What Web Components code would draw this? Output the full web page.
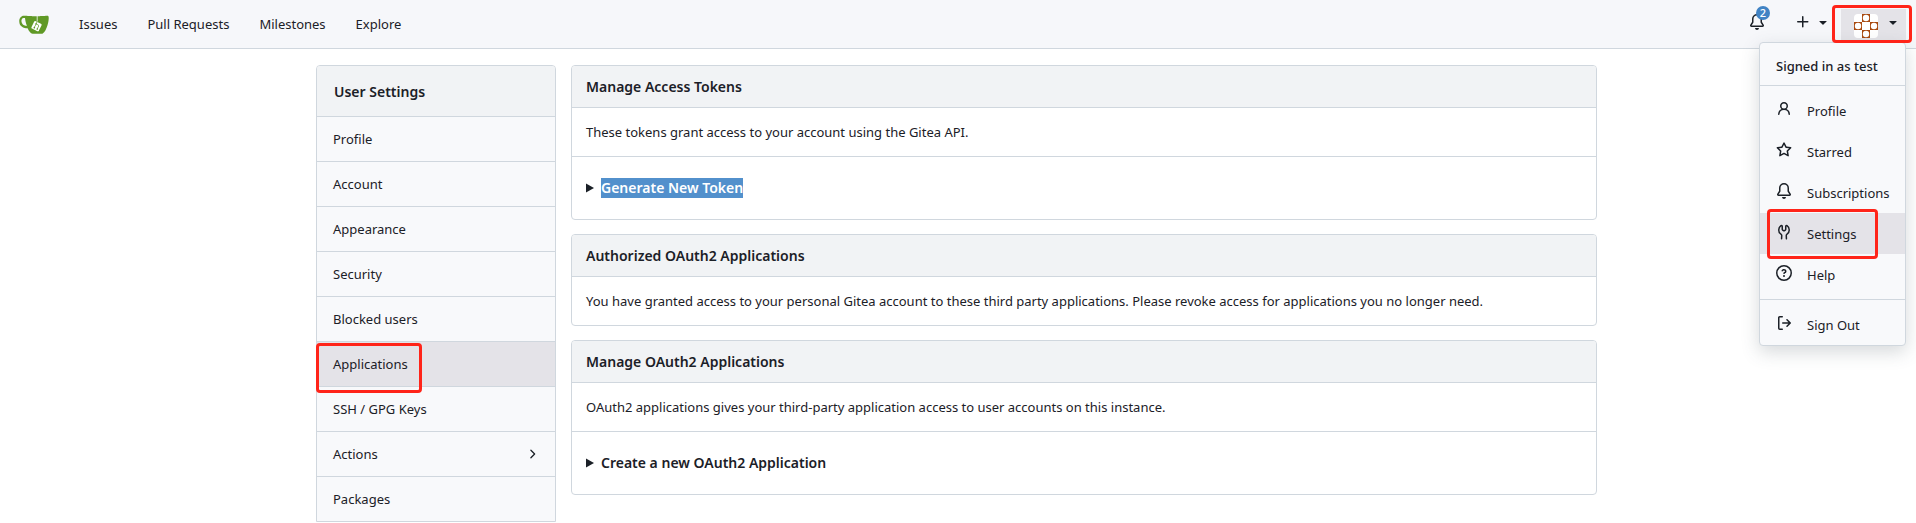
<!DOCTYPE html>
<html lang="en">
<head>
<meta charset="utf-8">
<title>Applications - User Settings - Gitea</title>
<style>
:root {
  --text: #1b2027;
  --border: #d0d7de;
  --nav: #f6f7fa;
  --menu: #f8f9fb;
  --header: #f1f3f5;
  --active: #e4e3e8;
  --accent: #4183c4;
  --mark: #ff2419;
}
body {
  margin: 0;
  background: #fff;
  color: var(--text);
  font: 13px/20px "Noto Sans", "Open Sans", sans-serif;
}
</style>
</head>
<body>
<top-nav>
  <nav-link>Issues</nav-link>
  <nav-link>Pull Requests</nav-link>
  <nav-link>Milestones</nav-link>
  <nav-link>Explore</nav-link>
  <user-menu slot="user" name="test"></user-menu>
</top-nav>
<settings-layout>
  <side-menu slot="side" heading="User Settings">
    <side-item>Profile</side-item>
    <side-item>Account</side-item>
    <side-item>Appearance</side-item>
    <side-item>Security</side-item>
    <side-item>Blocked users</side-item>
    <side-item active marked>Applications</side-item>
    <side-item>SSH / GPG Keys</side-item>
    <side-item more>Actions</side-item>
    <side-item>Packages</side-item>
  </side-menu>
  <settings-panel heading="Manage Access Tokens">
    These tokens grant access to your account using the Gitea API.
    <expand-row slot="extra" selected>Generate New Token</expand-row>
  </settings-panel>
  <settings-panel heading="Authorized OAuth2 Applications">
    You have granted access to your personal Gitea account to these third party applications. Please revoke access for applications you no longer need.
  </settings-panel>
  <settings-panel heading="Manage OAuth2 Applications">
    OAuth2 applications gives your third-party application access to user accounts on this instance.
    <expand-row slot="extra">Create a new OAuth2 Application</expand-row>
  </settings-panel>
</settings-layout>
<script>
const ICONS = {
  bell: 'M8 16a2 2 0 0 0 1.985-1.75c.017-.137-.097-.25-.235-.25h-3.5c-.138 0-.252.113-.235.25A2 2 0 0 0 8 16ZM3 5a5 5 0 0 1 10 0v2.947c0 .05.015.098.042.139l1.703 2.555A1.519 1.519 0 0 1 13.482 13H2.518a1.516 1.516 0 0 1-1.263-2.36l1.703-2.554A.255.255 0 0 0 3 7.947Zm5-3.5A3.5 3.5 0 0 0 4.5 5v2.947c0 .346-.102.683-.294.97l-1.703 2.556a.017.017 0 0 0-.003.01l.001.006c0 .002.002.004.004.006l.006.004.007.001h10.964l.007-.001.006-.004.004-.006.001-.007a.017.017 0 0 0-.003-.01l-1.703-2.554a1.745 1.745 0 0 1-.294-.97V5A3.5 3.5 0 0 0 8 1.5Z',
  plus: 'M7.75 2a.75.75 0 0 1 .75.75V7h4.25a.75.75 0 0 1 0 1.5H8.5v4.25a.75.75 0 0 1-1.5 0V8.5H2.75a.75.75 0 0 1 0-1.5H7V2.75A.75.75 0 0 1 7.75 2Z',
  caret: 'm4.427 7.427 3.396 3.396a.25.25 0 0 0 .354 0l3.396-3.396A.25.25 0 0 0 11.396 7H4.604a.25.25 0 0 0-.177.427Z',
  chevron: 'M6.22 3.22a.75.75 0 0 1 1.06 0l4.25 4.25a.75.75 0 0 1 0 1.06l-4.25 4.25a.751.751 0 0 1-1.042-.018.751.751 0 0 1-.018-1.042L9.94 8 6.22 4.28a.75.75 0 0 1 0-1.06Z',
  person: 'M10.561 8.073a6.005 6.005 0 0 1 3.432 5.142.75.75 0 1 1-1.498.07 4.5 4.5 0 0 0-8.99 0 .75.75 0 0 1-1.498-.07 6.004 6.004 0 0 1 3.431-5.142 3.999 3.999 0 1 1 5.123 0ZM10.5 5a2.5 2.5 0 1 0-5 0 2.5 2.5 0 0 0 5 0Z',
  star: 'M8 .25a.75.75 0 0 1 .673.418l1.882 3.815 4.21.612a.75.75 0 0 1 .416 1.279l-3.046 2.97.719 4.192a.751.751 0 0 1-1.088.791L8 12.347l-3.766 1.98a.75.75 0 0 1-1.088-.79l.72-4.194L.818 6.374a.75.75 0 0 1 .416-1.28l4.21-.611L7.327.668A.75.75 0 0 1 8 .25Zm0 2.445L6.615 5.5a.75.75 0 0 1-.564.41l-3.097.45 2.24 2.184a.75.75 0 0 1 .216.664l-.528 3.084 2.769-1.456a.75.75 0 0 1 .698 0l2.77 1.456-.53-3.084a.75.75 0 0 1 .216-.664l2.24-2.183-3.096-.45a.75.75 0 0 1-.564-.41L8 2.694Z',
  tools: 'M5.433 2.304A4.492 4.492 0 0 0 3.5 6c0 1.598.832 3.002 2.09 3.802.518.328.929.923.902 1.64v.008l-.164 3.337a.75.75 0 1 1-1.498-.073l.163-3.33c.002-.085-.05-.216-.207-.316A5.996 5.996 0 0 1 2 6a5.993 5.993 0 0 1 2.567-4.92 1.482 1.482 0 0 1 1.673-.04c.462.296.76.827.76 1.423v2.82c0 .082.041.16.11.206l.75.51a.25.25 0 0 0 .28 0l.75-.51A.249.249 0 0 0 9 5.282V2.463c0-.596.298-1.127.76-1.423a1.482 1.482 0 0 1 1.673.04A5.993 5.993 0 0 1 14 6a5.996 5.996 0 0 1-2.786 5.068c-.157.1-.209.23-.207.315l.163 3.33a.752.752 0 0 1-1.094.714.75.75 0 0 1-.404-.64l-.164-3.345c-.027-.717.384-1.312.902-1.64A4.495 4.495 0 0 0 12.5 6a4.492 4.492 0 0 0-1.933-3.696c-.024.017-.067.067-.067.16v2.818a1.75 1.75 0 0 1-.767 1.448l-.75.51a1.75 1.75 0 0 1-1.966 0l-.75-.51A1.75 1.75 0 0 1 5.5 5.282V2.463c0-.092-.043-.142-.067-.159Z',
  question: 'M0 8a8 8 0 1 1 16 0A8 8 0 0 1 0 8Zm8-6.5a6.5 6.5 0 1 0 0 13 6.5 6.5 0 0 0 0-13ZM6.92 6.085h.001a.749.749 0 1 1-1.342-.67c.169-.339.436-.701.849-.977C6.845 4.16 7.369 4 8 4a2.756 2.756 0 0 1 1.637.525c.503.377.863.965.863 1.725 0 .448-.115.83-.329 1.15-.205.307-.47.513-.692.662-.109.072-.22.138-.313.195l-.006.004a6.24 6.24 0 0 0-.26.16.952.952 0 0 0-.276.245.75.75 0 0 1-1.248-.832c.184-.264.42-.489.692-.661.103-.067.207-.132.313-.195l.007-.004c.1-.061.182-.11.258-.161a.969.969 0 0 0 .277-.245C8.96 6.514 9 6.427 9 6.25a.612.612 0 0 0-.262-.525A1.27 1.27 0 0 0 8 5.5c-.369 0-.595.09-.74.187a1.01 1.01 0 0 0-.34.398ZM9 11a1 1 0 1 1-2 0 1 1 0 0 1 2 0Z',
  exit: 'M2 2.75C2 1.784 2.784 1 3.75 1h2.5a.75.75 0 0 1 0 1.5h-2.5a.25.25 0 0 0-.25.25v10.5c0 .138.112.25.25.25h2.5a.75.75 0 0 1 0 1.5h-2.5A1.75 1.75 0 0 1 2 13.25Zm10.44 4.5-1.97-1.97a.749.749 0 0 1 .326-1.275.749.749 0 0 1 .734.215l3.25 3.25a.75.75 0 0 1 0 1.06l-3.25 3.25a.749.749 0 0 1-1.275-.326.749.749 0 0 1 .215-.734l1.97-1.97H6.75a.75.75 0 0 1 0-1.5Z'
};

function define(name, render) {
  customElements.define(name, class extends HTMLElement {
    connectedCallback() {
      if (!this.shadowRoot) this.attachShadow({ mode: 'open' }).innerHTML = render(this);
    }
  });
}

define('oct-icon', el => {
  const size = el.getAttribute('size') || 16;
  return `<style>:host{display:block;flex:none}svg{display:block;fill:currentColor}</style>
  <svg width="${size}" height="${size}" viewBox="0 0 16 16" aria-hidden="true"><path d="${ICONS[el.getAttribute('name')]}"/></svg>`;
});

/* Red frame drawn over its positioned parent. */
define('red-frame', () => `<style>
  :host{display:block;position:absolute;box-sizing:border-box;border:3px solid var(--mark);border-radius:4px;pointer-events:none;z-index:5}
</style>`);

define('gitea-logo', () => `<style>:host{display:block}svg{display:block}</style>
<svg width="30" height="30" viewBox="0 0 640 640" role="img" aria-label="Gitea">
<path fill="#fff" d="m395.9 484.2-126.9-61c-12.5-6-17.9-21.2-11.8-33.8l61-126.9c6-12.5 21.2-17.9 33.8-11.8 17.2 8.3 27.1 13 27.1 13l-.1-109.2 16.7-.1.1 117.1s57.4 24.2 83.1 40.1c3.7 2.3 10.2 6.8 12.9 14.4 2.1 6.1 2 13.1-1 19.3l-61 126.9c-6.2 12.7-21.4 18.1-33.9 12"/>
<path fill="#609926" d="M622.7 149.8c-4.1-4.1-9.6-4-9.6-4s-117.2 6.6-177.9 8c-13.3.3-26.5.6-39.6.7v117.2c-5.5-2.6-11.1-5.3-16.6-7.9 0-36.4-.1-109.2-.1-109.2-29 .4-89.2-2.2-89.2-2.2s-141.4-7.1-156.8-8.5c-9.8-.6-22.5-2.1-39 1.5-8.7 1.8-33.5 7.4-53.8 26.9C-4.9 212.4 6.6 276.2 8 285.8c1.7 11.7 6.9 44.2 31.7 72.5 45.8 56.1 144.4 54.8 144.4 54.8s12.1 28.9 30.6 55.5c25 33.1 50.7 58.9 75.7 62 63 0 188.9-.1 188.9-.1s12 .1 28.3-10.3c14-8.5 26.5-23.4 26.5-23.4S547 483 565 451.5c5.5-9.7 10.1-19.1 14.1-28 0 0 55.2-117.1 55.2-231.1-1.1-34.5-9.6-40.6-11.6-42.6M125.6 353.9c-25.9-8.5-36.9-18.7-36.9-18.7S69.6 321.8 60 295.4c-16.5-44.2-1.4-71.2-1.4-71.2s8.4-22.5 38.5-30c13.8-3.7 31-3.1 31-3.1s7.1 59.4 15.7 94.2c7.2 29.2 24.8 77.7 24.8 77.7s-26.1-3.1-43-9.1m300.3 107.6s-6.1 14.5-19.6 15.4c-5.8.4-10.3-1.2-10.3-1.2s-.3-.1-5.3-2.1l-112.9-55s-10.9-5.7-12.8-15.6c-2.2-8.1 2.7-18.1 2.7-18.1L322 273s4.8-9.7 12.2-13c.6-.3 2.3-1 4.5-1.5 8.1-2.1 18 2.8 18 2.8L467.4 315s12.6 5.7 15.3 16.2c1.9 7.4-.5 14-1.8 17.2-6.3 15.4-55 113.1-55 113.1"/>
<path fill="#609926" d="M326.8 380.1c-8.2.1-15.4 5.8-17.3 13.8s2 16.3 9.1 20c7.7 4 17.5 1.8 22.7-5.4 5.1-7.1 4.3-16.9-1.8-23.1l24-49.1c1.5.1 3.7.2 6.2-.5 4.1-.9 7.1-3.6 7.1-3.6 4.2 1.8 8.6 3.8 13.2 6.1 4.8 2.4 9.3 4.9 13.4 7.3.9.5 1.8 1.1 2.8 1.9 1.6 1.3 3.4 3.1 4.7 5.5 1.9 5.5-1.9 14.9-1.9 14.9-2.3 7.6-18.4 40.6-18.4 40.6-8.1-.2-15.3 5-17.7 12.5-2.6 8.1 1.1 17.3 8.9 21.3s17.4 1.7 22.5-5.3c5-6.8 4.6-16.3-1.1-22.6 1.9-3.7 3.7-7.4 5.6-11.3 5-10.4 13.5-30.4 13.5-30.4.9-1.7 5.7-10.3 2.7-21.3-2.5-11.4-12.6-16.7-12.6-16.7-12.2-7.9-29.2-15.2-29.2-15.2s0-4.1-1.1-7.1c-1.1-3.1-2.8-5.1-3.9-6.3 4.7-9.7 9.4-19.3 14.1-29-4.1-2-8.1-4-12.2-6.1-4.8 9.8-9.7 19.7-14.5 29.5-6.7-.1-12.9 3.5-16.1 9.4-3.4 6.3-2.7 14.1 1.9 19.8z"/>
</svg>`);

define('nav-link', () => `<style>:host{display:block}a{display:block;color:inherit;text-decoration:none;white-space:nowrap}</style><a href="#"><slot></slot></a>`);

define('top-nav', () => `<style>
  :host{display:block}
  nav{display:flex;align-items:center;justify-content:space-between;height:48px;padding:0 10px 0 19px;background:var(--nav);border-bottom:1px solid var(--border)}
  .left,.right,.create{display:flex;align-items:center}
  .left{gap:30px}
  .right{gap:10px}
  .right button{border:0;padding:0;margin:0 0 4px;background:none;color:inherit;font:inherit}
  .right .bell{position:relative;margin-right:20px}
  .badge{position:absolute;left:7px;top:-8px;width:14px;height:14px;border-radius:7px;background:var(--accent);color:#fff;font-size:11px;font-weight:500;line-height:14px;text-align:center}
  .create{gap:4px}
</style>
<nav aria-label="Main">
  <div class="left"><a href="#"><gitea-logo></gitea-logo></a><slot></slot></div>
  <div class="right">
    <button class="bell" aria-label="Notifications"><oct-icon name="bell"></oct-icon><span class="badge">2</span></button>
    <button class="create" aria-label="Create"><oct-icon name="plus"></oct-icon><oct-icon name="caret"></oct-icon></button>
    <slot name="user"></slot>
  </div>
</nav>`);

/* Identicon: four petals round a clear centre. */
define('user-avatar', () => {
  const petal = '<rect width="8" height="8" fill="#a8490f"/><circle cx="4" cy="4" r="3.2" fill="#fff"/>';
  const at = (x, y) => `<g transform="translate(${x} ${y})">${petal}</g>`;
  return `<style>:host{display:block;border-radius:4px;overflow:hidden}svg{display:block}</style>
  <svg width="24" height="24" viewBox="0 0 24 24" role="img" aria-label="test"><rect width="24" height="24" fill="#fff"/>${at(8,0)}${at(0,8)}${at(16,8)}${at(8,16)}</svg>`;
});

define('menu-entry', el => `<style>
  :host{display:block;position:relative}
  :host([active]){background:var(--active)}
  a{display:flex;gap:15px;height:41px;padding:0 16px;align-items:center;color:inherit;text-decoration:none;white-space:nowrap}
  oct-icon{margin-bottom:4px}
  red-frame{left:7px;top:-4px;width:111px;height:50px}
</style>
<a href="#"><oct-icon name="${el.getAttribute('icon')}"></oct-icon><slot></slot></a>${el.hasAttribute('active') ? '<red-frame></red-frame>' : ''}`);

define('user-menu', el => `<style>
  :host{display:block;position:relative;margin-top:2px}
  button{display:flex;align-items:center;gap:7px;height:32px;border:0;padding:0 5px 0 13px;background:var(--active);color:inherit;font:inherit}
  user-avatar{margin-top:2px}
  oct-icon{margin-bottom:6px}
  red-frame{left:-9px;right:-6px;top:-4px;height:38px}
  .menu{position:absolute;z-index:2;right:0;top:33px;width:147px;box-sizing:border-box;background:var(--menu);border:1px solid var(--border);border-radius:4px;box-shadow:0 6px 18px rgba(70,80,90,.22)}
  .who{font-weight:500;line-height:38px;padding:4px 16px 0;white-space:nowrap}
  .group{border-top:1px solid var(--border);padding:4px 0}
  .group:last-child{padding-bottom:0}
</style>
<button aria-label="User menu" aria-expanded="true"><user-avatar></user-avatar><oct-icon name="caret"></oct-icon></button>
<div class="menu">
  <div class="who">Signed in as ${el.getAttribute('name')}</div>
  <div class="group">
    <menu-entry icon="person">Profile</menu-entry>
    <menu-entry icon="star">Starred</menu-entry>
    <menu-entry icon="bell">Subscriptions</menu-entry>
    <menu-entry icon="tools" active>Settings</menu-entry>
    <menu-entry icon="question">Help</menu-entry>
  </div>
  <div class="group"><menu-entry icon="exit">Sign Out</menu-entry></div>
</div>
<red-frame></red-frame>`);

define('settings-layout', () => `<style>
  :host{display:grid;grid-template-columns:240px minmax(0,1fr);gap:15px;align-items:start;box-sizing:border-box;max-width:1284px;margin:16px auto 0;padding-right:3px}
  main{display:grid;gap:14px}
</style>
<slot name="side"></slot><main><slot></slot></main>`);

define('side-menu', el => `<style>
  :host{display:block;border:1px solid var(--border);border-radius:4px 4px 0 0;background:var(--menu)}
  h1{margin:0;padding:2px 17px 0;font-size:14px;font-weight:600;line-height:48px;background:var(--header);border-radius:3px 3px 0 0}
</style>
<h1>${el.getAttribute('heading')}</h1><nav aria-label="${el.getAttribute('heading')}"><slot></slot></nav>`);

define('side-item', el => `<style>
  :host{display:block;position:relative;border-top:1px solid var(--border)}
  :host([active]){background:var(--active)}
  a{display:flex;align-items:center;justify-content:space-between;height:44px;padding:0 16px;color:inherit;text-decoration:none}
  red-frame{left:-1px;top:1px;width:106px;height:50px}
</style>
<a href="#"><slot></slot>${el.hasAttribute('more') ? '<oct-icon name="chevron" size="14"></oct-icon>' : ''}</a>${el.hasAttribute('marked') ? '<red-frame></red-frame>' : ''}`);

define('settings-panel', el => `<style>
  :host{display:block;border:1px solid var(--border);border-radius:4px}
  h2{margin:0;padding:0 14px;font-size:14px;font-weight:600;line-height:41px;background:var(--header);border-radius:3px 3px 0 0}
  p{margin:0;padding:14px;border-top:1px solid var(--border)}
</style>
<h2>${el.getAttribute('heading')}</h2><p><slot></slot></p><slot name="extra"></slot>`);

define('expand-row', () => `<style>
  :host{display:block;padding:21px 14px;border-top:1px solid var(--border)}
  summary{display:flex;align-items:center;gap:7px;font-size:14px;font-weight:600;list-style:none}
  svg{display:block}
  span{line-height:20px}
  :host([selected]) span{background:#5290cc;color:#fff}
</style>
<details><summary><svg width="8" height="10" viewBox="0 0 8 10" aria-hidden="true"><path d="M0 0.5 8 5 0 9.5Z" fill="currentColor"/></svg><span><slot></slot></span></summary></details>`);
</script>
</body>
</html>
